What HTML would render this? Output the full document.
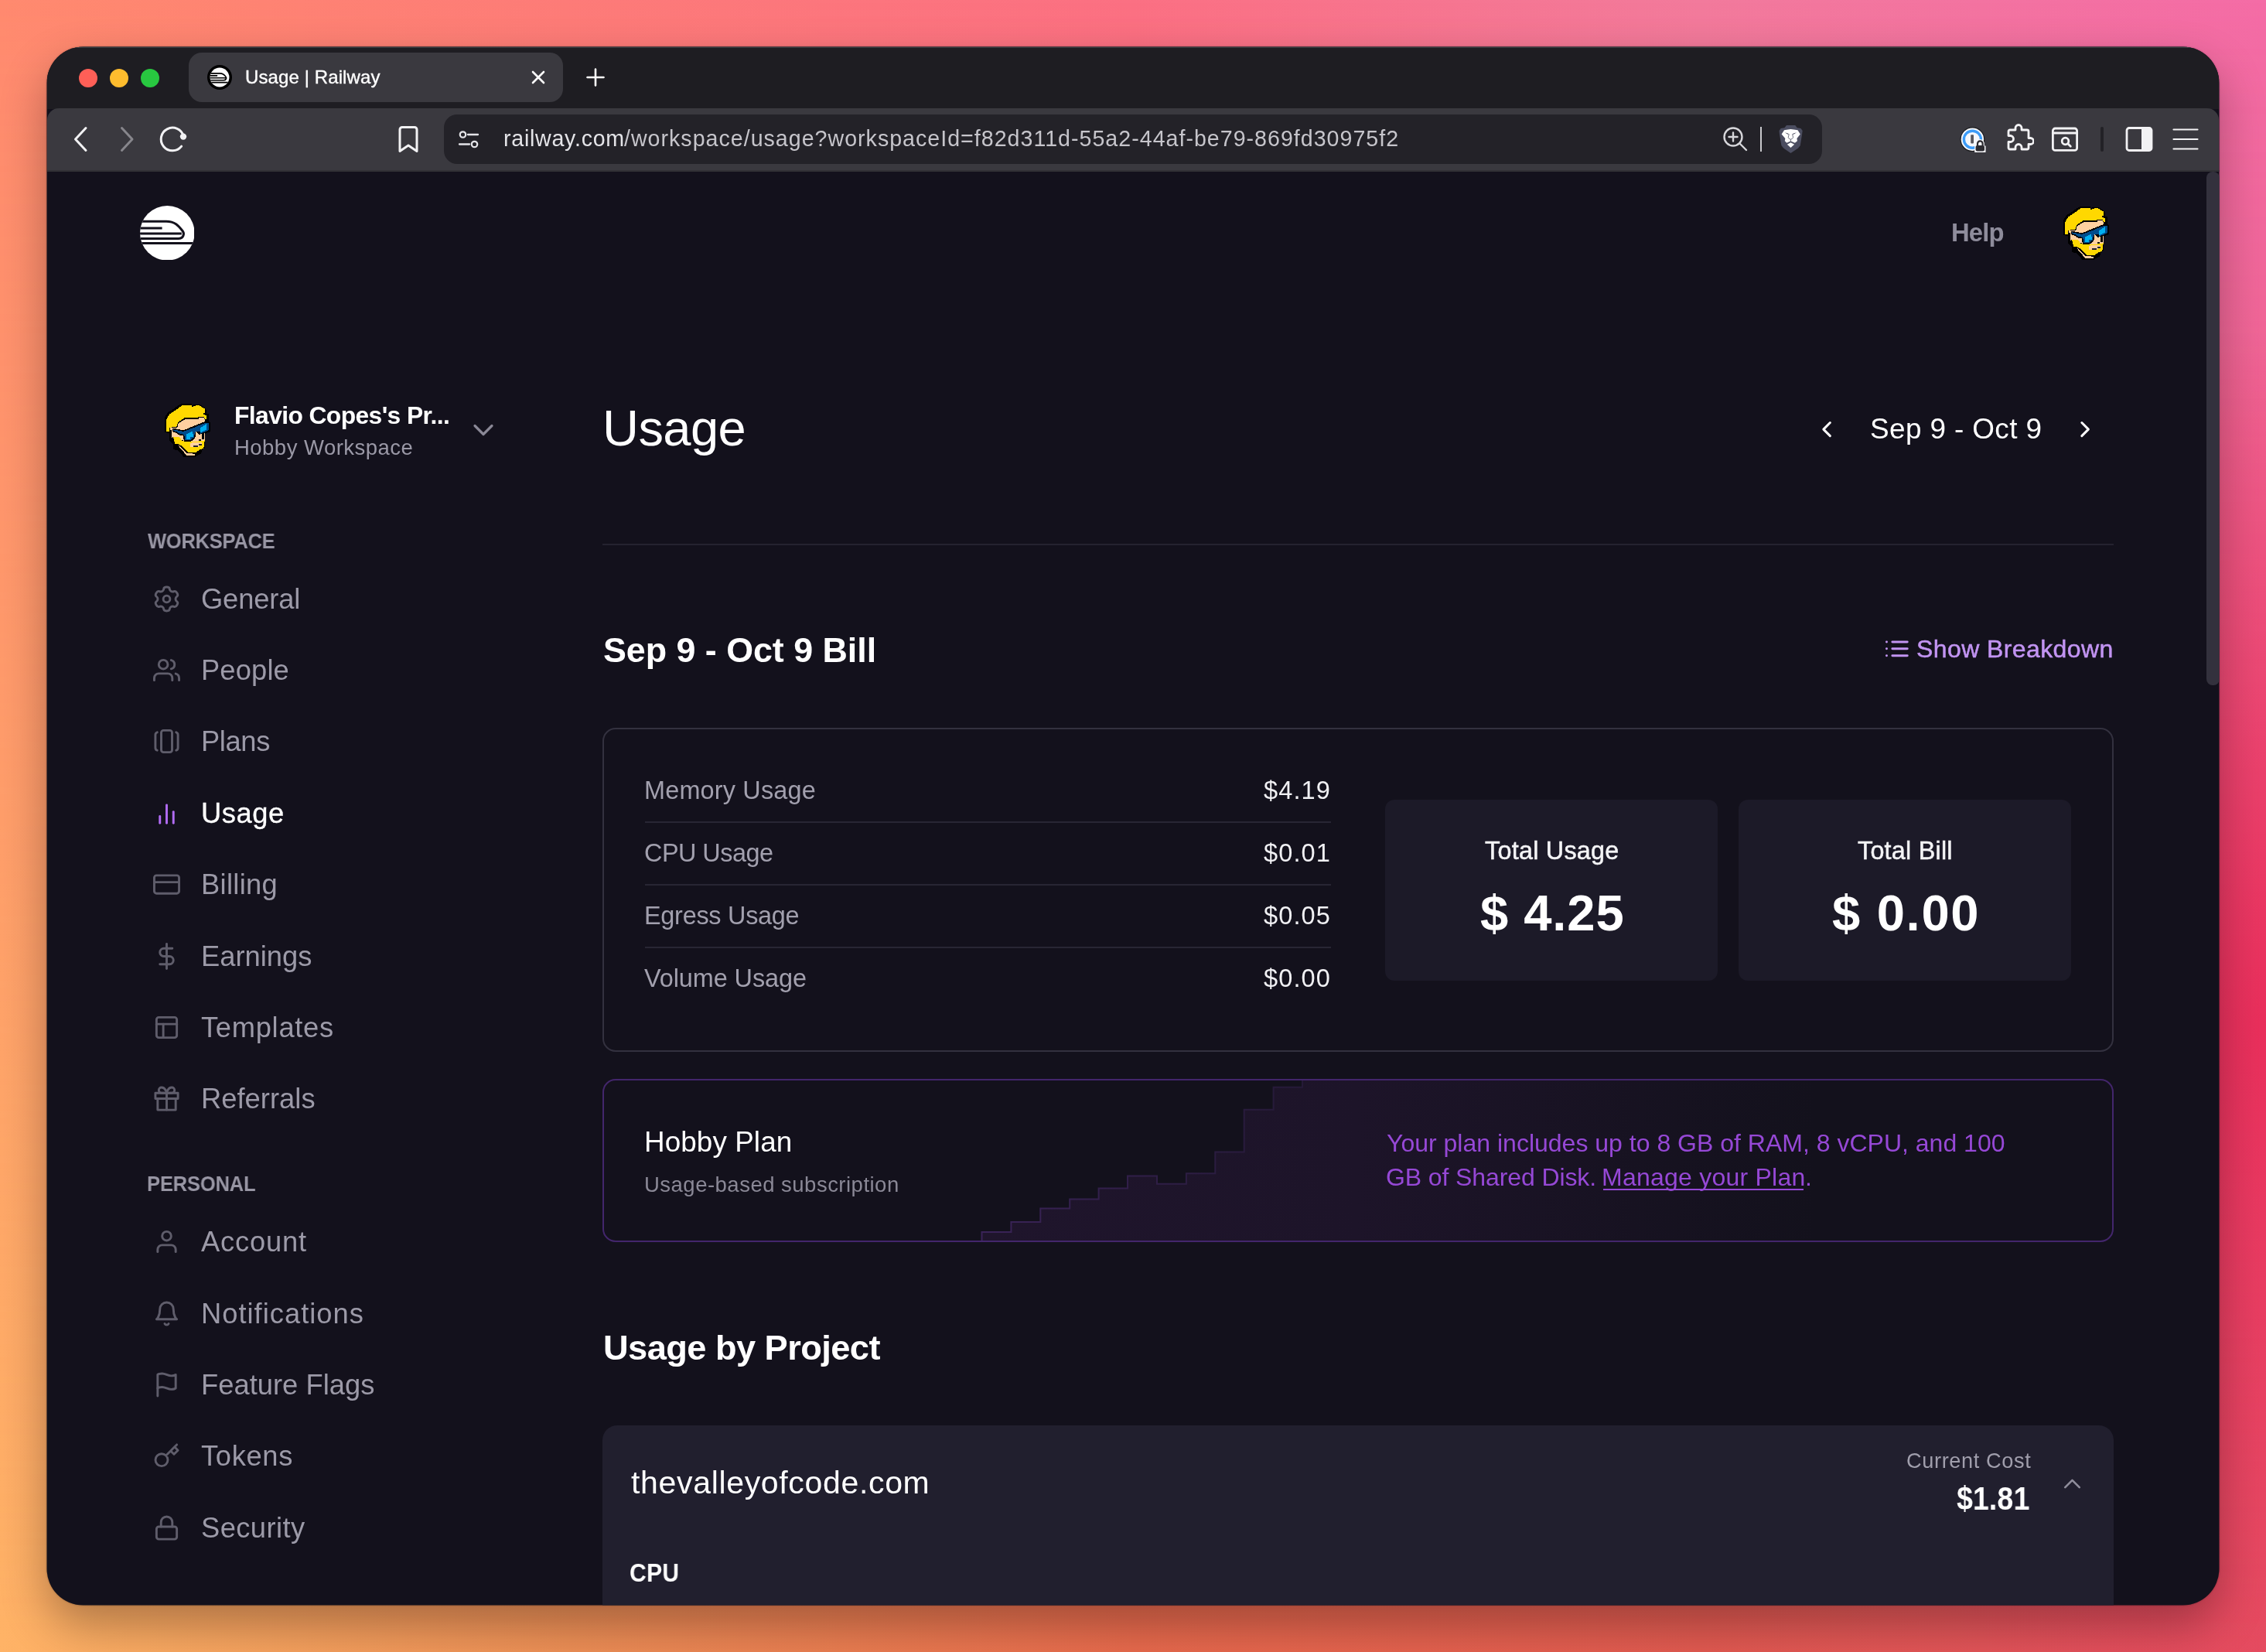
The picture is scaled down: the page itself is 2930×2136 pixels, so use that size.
<!DOCTYPE html>
<html><head><meta charset="utf-8"><title>Usage | Railway</title>
<style>
html,body{margin:0;padding:0}
body{width:2930px;height:2136px;overflow:hidden;position:relative;font-family:'Liberation Sans',sans-serif;
 background:linear-gradient(90deg,#ff8a6f 0%,#fd7b78 25%,#fb7083 50%,#f27a9c 75%,#f46ca6 100%);}
#bg2{left:0;top:0;width:2930px;height:2136px;background:linear-gradient(90deg,#ffb366 0%,#ee9056 25%,#e86a4c 50%,#e25a50 75%,#e44e60 100%);-webkit-mask-image:linear-gradient(180deg,rgba(0,0,0,0) 0%,rgba(0,0,0,1) 100%);mask-image:linear-gradient(180deg,rgba(0,0,0,0) 0%,rgba(0,0,0,1) 100%)}
#bg3{left:0;top:0;width:2930px;height:2136px;background:radial-gradient(ellipse 800px 900px at 100% 62%,rgba(234,36,84,.8) 0%,rgba(234,36,84,0) 100%)}
.a{position:absolute}
.t{position:absolute;white-space:pre;line-height:1;will-change:transform}
#shadow{left:61px;top:61px;width:2808px;height:2014px;border-radius:47px;box-shadow:0 26px 60px rgba(0,0,0,.30),0 0 3px rgba(0,0,0,.45);}
#win{left:0;top:0;width:2930px;height:2136px;clip-path:inset(60.5px 60.5px 60.5px 60.5px round 47px);background:#13111c}
</style></head><body>
<div id="bg2" class="a"></div><div id="bg3" class="a"></div>
<div id="shadow" class="a"></div>
<div id="win" class="a">
<!-- tab strip -->
<div class="a" style="left:61px;top:61px;width:2808px;height:80px;background:#1e1d22"></div>
<div class="a" style="left:61px;top:60px;width:2808px;height:2px;background:#3a3d40"></div>
<div class="a" style="left:102px;top:89px;width:24px;height:24px;border-radius:50%;background:#ff5f57"></div>
<div class="a" style="left:142px;top:89px;width:24px;height:24px;border-radius:50%;background:#febc2e"></div>
<div class="a" style="left:182px;top:89px;width:24px;height:24px;border-radius:50%;background:#28c840"></div>
<div class="a" style="left:244px;top:68px;width:484px;height:64px;border-radius:17px;background:#3a393f"></div>
<!-- favicon -->
<svg class="a" style="left:267.800px;top:83.900px" width="32" height="32" viewBox="0 0 70.600 70.600"><defs><clipPath id="fc"><circle cx="35.300" cy="35.300" r="27.500"/></clipPath></defs><circle cx="35.300" cy="35.300" r="35.300" fill="#000"/><circle cx="35.300" cy="35.300" r="27.500" fill="#fff"/>
<g stroke="#000" stroke-width="3.600" fill="none" clip-path="url(#fc)"><path d="M0 24H36C45 24 49 28 53 34C56 38 53 43.500 47 43.500H0M0 30.500H29M0 37H54M0 50H71"/></g></svg>
<svg class="a" style="left:684px;top:88px" width="24" height="24" viewBox="0 0 24 24" fill="none" stroke="#fff" stroke-width="2.600" stroke-linecap="round"><path d="M5 5L19 19M19 5L5 19"/></svg>
<svg class="a" style="left:756px;top:86px" width="28" height="28" viewBox="0 0 28 28" fill="none" stroke="#fff" stroke-width="2.600" stroke-linecap="round"><path d="M14 3.500V24.500M3.500 14H24.500"/></svg>
<!-- toolbar -->
<div class="a" style="left:61px;top:140px;width:2808px;height:82px;background:#3a393f;border-radius:15px 15px 0 0"></div>
<div class="a" style="left:61px;top:220px;width:2809px;height:2px;background:#323136"></div>
<svg class="a" style="left:88px;top:160px" width="36" height="40" viewBox="0 0 36 40" fill="none" stroke="#f2f2f4" stroke-width="3" stroke-linecap="round" stroke-linejoin="round"><path d="M23 5.500L9.500 20L23 34.500"/></svg>
<svg class="a" style="left:146px;top:160px" width="36" height="40" viewBox="0 0 36 40" fill="none" stroke="#87868c" stroke-width="3" stroke-linecap="round" stroke-linejoin="round"><path d="M11.500 5.500L25 20L11.500 34.500"/></svg>
<svg class="a" style="left:203px;top:160px" width="40" height="40" viewBox="0 0 40 40" fill="none" stroke="#f2f2f4" stroke-width="3" stroke-linecap="round"><path d="M31.660 29.110A14.800 14.800 0 1 1 34.300 16.170"/><circle cx="34" cy="16.600" r="4.200" fill="#f2f2f4" stroke="none"/></svg>
<svg class="a" style="left:513px;top:160px" width="30" height="40" viewBox="0 0 30 40" fill="none" stroke="#f2f2f4" stroke-width="3" stroke-linejoin="round"><path d="M4 7.500a3 3 0 0 1 3-3h16a3 3 0 0 1 3 3V35.500L15 28L4 35.500Z"/></svg>
<div class="a" style="left:574px;top:148px;width:1782px;height:64px;border-radius:17px;background:#232228"></div>
<svg class="a" style="left:590px;top:164px" width="32" height="32" viewBox="0 0 32 32" fill="none" stroke="#e4e4e8" stroke-width="2.300" stroke-linecap="round"><circle cx="8.500" cy="10" r="3.700"/><path d="M15 10H28"/><circle cx="23.500" cy="22.500" r="3.700"/><path d="M4 22.500H17"/></svg>
<!-- url right icons -->
<svg class="a" style="left:2226px;top:162px" width="36" height="36" viewBox="0 0 36 36" fill="none" stroke="#d6d6da" stroke-width="2.400" stroke-linecap="round"><circle cx="15" cy="15" r="11.500"/><path d="M23.500 23.500L32 32M15 9.500V20.500M9.500 15H20.500"/></svg>
<div class="a" style="left:2276px;top:164px;width:2px;height:32px;background:#c8c8cc"></div>
<svg class="a" style="left:2290px;top:150px" width="55" height="60" viewBox="0 0 1514 1652"><polygon fill="#4b4d60" points="550,330 860,330 930,420 1060,440 1120,520 1105,640 1040,1050 960,1150 700,1320 450,1150 370,1050 300,640 290,520 350,440 480,420"/><polygon fill="#fff" points="470,500 600,480 700,470 810,480 950,500 1040,650 920,800 935,890 850,960 720,900 700,880 680,900 560,960 490,890 505,800 375,650"/><polygon fill="#fff" points="700,940 830,1010 700,1130 575,1010"/><path d="M490 590Q560 598 645 640L600 652Q550 615 490 590ZM910 590Q840 598 755 640L800 652Q850 615 910 590Z" fill="#3c3e50"/><path d="M640 645L612 765Q640 822 700 832Q760 822 788 765L760 645M700 832V885" fill="none" stroke="#3c3e50" stroke-width="20" stroke-linejoin="round"/></svg>
<!-- ext icons -->
<svg class="a" style="left:2530px;top:160px" width="42" height="42" viewBox="0 0 42 42"><circle cx="20.400" cy="20.200" r="15.900" fill="#1b1b1e"/><circle cx="20.400" cy="20.200" r="14.700" fill="#f6f7fa"/><circle cx="20.400" cy="20.200" r="11" fill="none" stroke="#3d9cf8" stroke-width="3.400"/><rect x="18.200" y="14.200" width="3.800" height="11.200" rx="0.800" fill="#58575d"/><path d="M23.200 29.500v-3.500a6.300 6.300 0 0 1 12.600 0v2.500h1.700v8.500h-14.300Z" fill="#f6f7fa"/><rect x="24.600" y="28" width="11.400" height="7.600" rx="2" fill="#2c2b30"/><path d="M27 28.500v-2.800a3.300 3.300 0 0 1 6.600 0v2.800" fill="none" stroke="#2c2b30" stroke-width="2.200"/></svg>
<svg class="a" style="left:2592px;top:159px" width="38" height="38" viewBox="0 0 38 38" fill="none" stroke="#f2f2f4" stroke-width="2.800" stroke-linejoin="round"><path d="M14 6.500a4 4 0 0 1 8 0V9h7a2 2 0 0 1 2 2v8.500h2.500a4 4 0 0 1 0 8H31v4.500a2 2 0 0 1-2 2h-7v-2.500a4 4 0 0 0-8 0V34H7a2 2 0 0 1-2-2v-7.500h2.500a4 4 0 0 0 0-8H5v-5.500a2 2 0 0 1 2-2h7Z"/></svg>
<svg class="a" style="left:2651px;top:163px" width="38" height="34" viewBox="0 0 38 34" fill="none" stroke="#f2f2f4" stroke-width="2.800" stroke-linecap="round"><rect x="3.400" y="3" width="31.200" height="28.400" rx="3"/><path d="M3.400 9H34.600" stroke-width="3.200"/><circle cx="19.500" cy="19.500" r="4.300"/><path d="M22.800 22.800L26.300 26.300"/></svg>
<div class="a" style="left:2715.500px;top:164px;width:4px;height:32px;background:#222126;border-radius:2px"></div>
<svg class="a" style="left:2748px;top:163px" width="36" height="34" viewBox="0 0 36 34"><rect x="2" y="2.500" width="32" height="29" rx="3" fill="none" stroke="#f2f2f4" stroke-width="2.800"/><rect x="21" y="3" width="13" height="28" fill="#f2f2f4"/></svg>
<svg class="a" style="left:2808px;top:164px" width="36" height="32" viewBox="0 0 36 32" fill="none" stroke="#f4f4f6" stroke-width="2.200" stroke-linecap="round"><path d="M2.500 3.500H33.500M2.500 16H33.500M2.500 28.500H33.500"/></svg>
<!-- scrollbar -->
<div class="a" style="left:2853px;top:222px;width:17px;height:664px;background:#33313d;border-radius:8px"></div>

<!-- page -->
<svg class="a" style="left:180.600px;top:265.800px" width="70.600" height="70.600" viewBox="0 0 70.600 70.600"><defs><clipPath id="lc"><circle cx="35.300" cy="35.300" r="35.300"/></clipPath></defs><circle cx="35.300" cy="35.300" r="35.300" fill="#fff"/>
<g stroke="#13111c" stroke-width="3" fill="none" clip-path="url(#lc)"><path d="M0 20.200H34C45 20.200 49.500 25.500 55.200 32.800C58 36.500 56 42.500 49.500 42.500H0"/><path d="M0 29H28.600M0 36H53.800M0 48.500H71"/></g></svg>
<svg class="a" style="left:2655px;top:255px" width="90" height="90" viewBox="0 0 1652 1652" shape-rendering="crispEdges">
<polygon fill="#000" points="640,225 880,225 880,262 960,235 1080,245 1215,330 1235,460 1285,470 1285,625 1320,660 1320,885 1200,930 1200,1250 1135,1300 1100,1400 960,1480 690,1480 545,1330 440,1300 440,1180 350,1100 350,920 240,900 240,540 310,430 470,330 560,260"/>
<polygon fill="#ffd800" points="650,262 880,262 880,300 990,262 1060,262 1195,345 1195,440 1160,440 1160,470 1230,500 1230,580 1190,590 1160,530 1040,530 1030,560 720,545 640,600 560,660 520,760 350,790 350,890 282,890 282,590 350,470 520,360"/>
<polygon fill="#ffd0a0" points="560,690 640,640 720,590 1040,590 1040,545 1160,545 1190,600 1190,1100 900,1150 700,1100 440,1000 400,1040 400,850 362,830 362,800 540,780"/>
<polygon fill="#ffd800" points="440,1010 590,1010 640,1100 900,1130 1190,1090 1160,1290 1080,1300 990,1370 800,1370 600,1190 480,1170"/>
<polygon fill="#ffd0a0" points="560,1215 620,1215 800,1390 950,1410 950,1450 760,1450"/><polygon fill="#ffd0a0" points="850,1150 1110,1130 1120,1185 1030,1250 850,1250"/>
<polygon fill="#000" points="420,800 690,850 900,760 1200,640 1300,640 1300,870 1170,920 1170,1060 1120,1060 1120,940 1060,950 980,880 960,1030 860,1120 700,1120 670,980 590,970 500,910 420,880"/>
<polygon fill="#004c8c" points="440,830 680,880 900,800 1200,675 1285,675 1285,850 1160,900 1090,930 1090,890 1000,880 950,900 940,1010 840,1090 720,1090 700,950 600,940 520,885 440,860"/>
<polygon fill="#00aeef" points="760,940 900,870 920,1010 845,1020 835,1060 760,1060"/>
<polygon fill="#00aeef" points="1090,790 1230,700 1235,830 1160,870 1090,900"/>
<rect fill="#111" x="1040" y="1065" width="70" height="28"/><rect fill="#223" x="1040" y="1180" width="75" height="26"/><rect fill="#223" x="920" y="1215" width="110" height="26"/>
<polygon fill="#000" points="580,1215 640,1215 820,1390 760,1390"/>
</svg>
<svg class="a" style="left:200px;top:510px" width="90" height="90" viewBox="0 0 1652 1652" shape-rendering="crispEdges">
<polygon fill="#000" points="640,225 880,225 880,262 960,235 1080,245 1215,330 1235,460 1285,470 1285,625 1320,660 1320,885 1200,930 1200,1250 1135,1300 1100,1400 960,1480 690,1480 545,1330 440,1300 440,1180 350,1100 350,920 240,900 240,540 310,430 470,330 560,260"/>
<polygon fill="#ffd800" points="650,262 880,262 880,300 990,262 1060,262 1195,345 1195,440 1160,440 1160,470 1230,500 1230,580 1190,590 1160,530 1040,530 1030,560 720,545 640,600 560,660 520,760 350,790 350,890 282,890 282,590 350,470 520,360"/>
<polygon fill="#ffd0a0" points="560,690 640,640 720,590 1040,590 1040,545 1160,545 1190,600 1190,1100 900,1150 700,1100 440,1000 400,1040 400,850 362,830 362,800 540,780"/>
<polygon fill="#ffd800" points="440,1010 590,1010 640,1100 900,1130 1190,1090 1160,1290 1080,1300 990,1370 800,1370 600,1190 480,1170"/>
<polygon fill="#ffd0a0" points="560,1215 620,1215 800,1390 950,1410 950,1450 760,1450"/><polygon fill="#ffd0a0" points="850,1150 1110,1130 1120,1185 1030,1250 850,1250"/>
<polygon fill="#000" points="420,800 690,850 900,760 1200,640 1300,640 1300,870 1170,920 1170,1060 1120,1060 1120,940 1060,950 980,880 960,1030 860,1120 700,1120 670,980 590,970 500,910 420,880"/>
<polygon fill="#004c8c" points="440,830 680,880 900,800 1200,675 1285,675 1285,850 1160,900 1090,930 1090,890 1000,880 950,900 940,1010 840,1090 720,1090 700,950 600,940 520,885 440,860"/>
<polygon fill="#00aeef" points="760,940 900,870 920,1010 845,1020 835,1060 760,1060"/>
<polygon fill="#00aeef" points="1090,790 1230,700 1235,830 1160,870 1090,900"/>
<rect fill="#111" x="1040" y="1065" width="70" height="28"/><rect fill="#223" x="1040" y="1180" width="75" height="26"/><rect fill="#223" x="920" y="1215" width="110" height="26"/>
<polygon fill="#000" points="580,1215 640,1215 820,1390 760,1390"/>
</svg>
<div class="a" style="left:779px;top:703px;width:1954px;height:2px;background:#24222f"></div>
<!-- bill card -->
<div class="a" style="left:779px;top:941px;width:1954px;height:419px;box-sizing:border-box;border:2px solid #33313f;border-radius:17px"></div>
<div class="a" style="left:834px;top:1062px;width:887px;height:2px;background:#282634"></div>
<div class="a" style="left:834px;top:1143px;width:887px;height:2px;background:#282634"></div>
<div class="a" style="left:834px;top:1224px;width:887px;height:2px;background:#282634"></div>
<div class="a" style="left:1791px;top:1034px;width:430px;height:234px;border-radius:12px;background:#1c1a28"></div>
<div class="a" style="left:2248px;top:1034px;width:430px;height:234px;border-radius:12px;background:#1c1a28"></div>
<!-- plan card -->
<div class="a" style="left:779px;top:1395px;width:1954px;height:211px;border-radius:17px;overflow:hidden">
<svg class="a" style="left:0;top:0" width="1954" height="211" viewBox="779 1395 1954 211">
<defs><linearGradient id="pg" x1="1270" x2="2350" y1="0" y2="0" gradientUnits="userSpaceOnUse"><stop offset="0" stop-color="#1f152c"/><stop offset=".45" stop-color="#1d1429"/><stop offset="1" stop-color="#13111c"/></linearGradient>
<linearGradient id="ps" x1="1270" x2="1700" y1="0" y2="0" gradientUnits="userSpaceOnUse"><stop offset="0" stop-color="#3a2358"/><stop offset="1" stop-color="#241936"/></linearGradient></defs>
<path d="M1269.500 1606V1593H1307.400V1579.900H1345.300V1562.600H1383.200V1550.400H1420.600V1536.400H1458V1520.500H1496V1530.700H1533.900V1517.200H1571.300V1489.600H1608.700V1434.800H1646.600V1405.800H1684V1395H2733V1606Z" fill="url(#pg)"/>
<path d="M1269.500 1606V1593H1307.400V1579.900H1345.300V1562.600H1383.200V1550.400H1420.600V1536.400H1458V1520.500H1496V1530.700H1533.900V1517.200H1571.300V1489.600H1608.700V1434.800H1646.600V1405.800H1684V1395" fill="none" stroke="url(#ps)" stroke-width="2"/>
</svg></div>
<div class="a" style="left:779px;top:1395px;width:1954px;height:211px;box-sizing:border-box;border:2px solid #43266c;border-radius:17px"></div>
<!-- project card -->
<div class="a" style="left:779px;top:1843px;width:1954px;height:300px;border-radius:19px;background:#211f2e"></div>
<div class="a" style="left:2072.9px;top:1537.1px;width:259.5px;height:2.4px;background:#9648d6"></div>
<svg class="a" style="left:198.0px;top:756.5px" width="35" height="35" viewBox="0 0 24 24" fill="none" stroke="#5f5d6b" stroke-width="2" stroke-linecap="round" stroke-linejoin="round" ><circle cx="12" cy="12" r="3"/><path d="M8.06 5.18Q9.26 4.48 9.41 2.93Q9.55 1.38 12.00 1.38Q14.45 1.38 14.59 2.93Q14.74 4.48 15.94 5.18Q17.14 5.87 18.56 5.22Q19.97 4.57 21.20 6.69Q22.42 8.81 21.15 9.71Q19.88 10.61 19.88 12.00Q19.88 13.39 21.15 14.29Q22.42 15.19 21.20 17.31Q19.97 19.43 18.56 18.78Q17.14 18.13 15.94 18.82Q14.74 19.52 14.59 21.07Q14.45 22.62 12.00 22.62Q9.55 22.62 9.41 21.07Q9.26 19.52 8.06 18.82Q6.86 18.13 5.44 18.78Q4.03 19.43 2.80 17.31Q1.58 15.19 2.85 14.29Q4.12 13.39 4.12 12.00Q4.12 10.61 2.85 9.71Q1.58 8.81 2.80 6.69Q4.03 4.57 5.44 5.22Q6.86 5.87 8.06 5.18Z"/></svg>
<svg class="a" style="left:198.0px;top:848.9px" width="35" height="35" viewBox="0 0 24 24" fill="none" stroke="#5f5d6b" stroke-width="2" stroke-linecap="round" stroke-linejoin="round" ><path d="M17 21v-2a4 4 0 0 0-4-4H5a4 4 0 0 0-4 4v2"/><circle cx="9" cy="7" r="4"/><path d="M23 21v-2a4 4 0 0 0-3-3.87"/><path d="M16 3.13a4 4 0 0 1 0 7.75"/></svg>
<svg class="a" style="left:198.0px;top:941.3px" width="35" height="35" viewBox="0 0 24 24" fill="none" stroke="#5f5d6b" stroke-width="2" stroke-linecap="round" stroke-linejoin="round" ><rect x="7.2" y="2.3" width="9.6" height="19.4" rx="2"/><path d="M3.6 4C2.5 4.3 2 5.2 2 6.4v11.2c0 1.2.5 2.1 1.6 2.4"/><path d="M20.4 4c1.1.3 1.6 1.2 1.6 2.4v11.2c0 1.2-.5 2.1-1.6 2.4"/></svg>
<svg class="a" style="left:198.0px;top:1034.5px" width="35" height="35" viewBox="0 0 24 24" fill="none" stroke="#b26cf5" stroke-width="2" stroke-linecap="round" stroke-linejoin="round" ><line x1="18" y1="20" x2="18" y2="10"/><line x1="12" y1="20" x2="12" y2="4"/><line x1="6" y1="20" x2="6" y2="14"/></svg>
<svg class="a" style="left:198.0px;top:1126.1px" width="35" height="35" viewBox="0 0 24 24" fill="none" stroke="#5f5d6b" stroke-width="2" stroke-linecap="round" stroke-linejoin="round" ><rect x="1" y="4" width="22" height="16" rx="2" ry="2"/><line x1="1" y1="10" x2="23" y2="10"/></svg>
<svg class="a" style="left:198.0px;top:1218.5px" width="35" height="35" viewBox="0 0 24 24" fill="none" stroke="#5f5d6b" stroke-width="2" stroke-linecap="round" stroke-linejoin="round" ><line x1="12" y1="1" x2="12" y2="23"/><path d="M17 5H9.5a3.5 3.5 0 0 0 0 7h5a3.5 3.5 0 0 1 0 7H6"/></svg>
<svg class="a" style="left:198.0px;top:1310.9px" width="35" height="35" viewBox="0 0 24 24" fill="none" stroke="#5f5d6b" stroke-width="2" stroke-linecap="round" stroke-linejoin="round" ><rect x="3" y="3" width="18" height="18" rx="2" ry="2"/><line x1="3" y1="9" x2="21" y2="9"/><line x1="9" y1="21" x2="9" y2="9"/></svg>
<svg class="a" style="left:198.0px;top:1403.3px" width="35" height="35" viewBox="0 0 24 24" fill="none" stroke="#5f5d6b" stroke-width="2" stroke-linecap="round" stroke-linejoin="round" ><polyline points="20 12 20 22 4 22 4 12"/><rect x="2" y="7" width="20" height="5"/><line x1="12" y1="22" x2="12" y2="7"/><path d="M12 7H7.5a2.5 2.5 0 0 1 0-5C11 2 12 7 12 7z"/><path d="M12 7h4.5a2.5 2.5 0 0 0 0-5C13 2 12 7 12 7z"/></svg>
<svg class="a" style="left:198.0px;top:1588.1px" width="35" height="35" viewBox="0 0 24 24" fill="none" stroke="#5f5d6b" stroke-width="2" stroke-linecap="round" stroke-linejoin="round" ><path d="M20 21v-2a4 4 0 0 0-4-4H8a4 4 0 0 0-4 4v2"/><circle cx="12" cy="7" r="4"/></svg>
<svg class="a" style="left:198.0px;top:1680.5px" width="35" height="35" viewBox="0 0 24 24" fill="none" stroke="#5f5d6b" stroke-width="2" stroke-linecap="round" stroke-linejoin="round" ><path d="M18 8A6 6 0 0 0 6 8c0 7-3 9-3 9h18s-3-2-3-9"/><path d="M13.73 21a2 2 0 0 1-3.46 0"/></svg>
<svg class="a" style="left:198.0px;top:1772.9px" width="35" height="35" viewBox="0 0 24 24" fill="none" stroke="#5f5d6b" stroke-width="2" stroke-linecap="round" stroke-linejoin="round" ><path d="M4 15s1-1 4-1 5 2 8 2 4-1 4-1V3s-1 1-4 1-5-2-8-2-4 1-4 1z"/><line x1="4" y1="22" x2="4" y2="15"/></svg>
<svg class="a" style="left:198.0px;top:1865.3px" width="35" height="35" viewBox="0 0 24 24" fill="none" stroke="#5f5d6b" stroke-width="2" stroke-linecap="round" stroke-linejoin="round" ><path d="M21 2l-2 2m-7.61 7.61a5.5 5.5 0 1 1-7.778 7.778 5.5 5.5 0 0 1 7.777-7.777zm0 0L15.5 7.500m0 0l3 3L22 7l-3-3m-3.500 3.500L19 4"/></svg>
<svg class="a" style="left:198.0px;top:1957.7px" width="35" height="35" viewBox="0 0 24 24" fill="none" stroke="#5f5d6b" stroke-width="2" stroke-linecap="round" stroke-linejoin="round" ><rect x="3" y="11" width="18" height="11" rx="2" ry="2"/><path d="M7 11V7a5 5 0 0 1 10 0v4"/></svg>
<svg class="a" style="left:603.0px;top:534.0px" width="44" height="44" viewBox="0 0 24 24" fill="none" stroke="#8a8896" stroke-width="1.75" stroke-linecap="round" stroke-linejoin="round" ><polyline points="6 9 12 15 18 9"/></svg>
<svg class="a" style="left:2344.6px;top:538.1px" width="34.2" height="34.2" viewBox="0 0 24 24" fill="none" stroke="#ffffff" stroke-width="2.1" stroke-linecap="round" stroke-linejoin="round" ><polyline points="15 18 9 12 15 6"/></svg>
<svg class="a" style="left:2678.7px;top:538.1px" width="34.2" height="34.2" viewBox="0 0 24 24" fill="none" stroke="#ffffff" stroke-width="2.1" stroke-linecap="round" stroke-linejoin="round" ><polyline points="9 18 15 12 9 6"/></svg>
<svg class="a" style="left:2435.1px;top:820.6px" width="35.7" height="35.7" viewBox="0 0 24 24" fill="none" stroke="#c294f2" stroke-width="2" stroke-linecap="round" stroke-linejoin="round" ><line x1="8" y1="6" x2="21" y2="6"/><line x1="8" y1="12" x2="21" y2="12"/><line x1="8" y1="18" x2="21" y2="18"/><line x1="3" y1="6" x2="3.01" y2="6"/><line x1="3" y1="12" x2="3.01" y2="12"/><line x1="3" y1="18" x2="3.01" y2="18"/></svg>
<svg class="a" style="left:2661.2px;top:1899.9px" width="37" height="37" viewBox="0 0 24 24" fill="none" stroke="#8f8d9b" stroke-width="1.7" stroke-linecap="round" stroke-linejoin="round" ><polyline points="18 15 12 9 6 15"/></svg>
<span class="t" style="left:316.60px;top:88.38px;font-size:24px;font-weight:400;color:#ffffff;letter-spacing:0.102px;-webkit-text-stroke:0.35px #ffffff;">Usage | Railway</span>
<span class="t" style="left:650.90px;top:165.29px;font-size:28.6px;font-weight:400;color:#e4e4e8;letter-spacing:0.730px;">railway.com</span>
<span class="t" style="left:806.80px;top:165.29px;font-size:28.6px;font-weight:400;color:#c6c5cb;letter-spacing:1.008px;">/workspace/usage?workspaceId=f82d311d-55a2-44af-be79-869fd30975f2</span>
<span class="t" style="left:2523.00px;top:285.33px;font-size:32.8px;font-weight:700;color:#8e8c9b;letter-spacing:-0.812px;">Help</span>
<span class="t" style="left:303.40px;top:521.88px;font-size:31.8px;font-weight:700;color:#ffffff;letter-spacing:-0.604px;">Flavio Copes's Pr...</span>
<span class="t" style="left:303.40px;top:564.62px;font-size:27.5px;font-weight:400;color:#9a98a6;letter-spacing:0.473px;">Hobby Workspace</span>
<span class="t" style="left:190.50px;top:686.18px;font-size:27.2px;font-weight:700;color:#9896a4;letter-spacing:-0.324px;transform:scaleX(0.94);transform-origin:0 0;">WORKSPACE</span>
<span class="t" style="left:189.56px;top:1516.78px;font-size:27.2px;font-weight:700;color:#9896a4;letter-spacing:-0.210px;transform:scaleX(0.94);transform-origin:0 0;">PERSONAL</span>
<span class="t" style="left:260.00px;top:756.87px;font-size:36.3px;font-weight:400;color:#9c9aa8;letter-spacing:-0.144px;">General</span>
<span class="t" style="left:260.00px;top:849.27px;font-size:36.3px;font-weight:400;color:#9c9aa8;letter-spacing:0.153px;">People</span>
<span class="t" style="left:260.00px;top:940.67px;font-size:36.3px;font-weight:400;color:#9c9aa8;letter-spacing:-0.362px;">Plans</span>
<span class="t" style="left:260.00px;top:1034.07px;font-size:36.3px;font-weight:400;color:#ffffff;letter-spacing:0.541px;-webkit-text-stroke:0.3px #ffffff;">Usage</span>
<span class="t" style="left:260.00px;top:1126.47px;font-size:36.3px;font-weight:400;color:#9c9aa8;letter-spacing:0.308px;">Billing</span>
<span class="t" style="left:260.00px;top:1218.87px;font-size:36.3px;font-weight:400;color:#9c9aa8;letter-spacing:0.028px;">Earnings</span>
<span class="t" style="left:260.00px;top:1311.27px;font-size:36.3px;font-weight:400;color:#9c9aa8;letter-spacing:0.715px;">Templates</span>
<span class="t" style="left:260.00px;top:1402.67px;font-size:36.3px;font-weight:400;color:#9c9aa8;letter-spacing:0.038px;">Referrals</span>
<span class="t" style="left:260.00px;top:1588.47px;font-size:36.3px;font-weight:400;color:#9c9aa8;letter-spacing:0.839px;">Account</span>
<span class="t" style="left:260.00px;top:1680.87px;font-size:36.3px;font-weight:400;color:#9c9aa8;letter-spacing:1.012px;">Notifications</span>
<span class="t" style="left:260.00px;top:1773.27px;font-size:36.3px;font-weight:400;color:#9c9aa8;letter-spacing:0.035px;">Feature Flags</span>
<span class="t" style="left:260.00px;top:1864.67px;font-size:36.3px;font-weight:400;color:#9c9aa8;letter-spacing:0.669px;">Tokens</span>
<span class="t" style="left:260.00px;top:1958.07px;font-size:36.3px;font-weight:400;color:#9c9aa8;letter-spacing:0.433px;">Security</span>
<span class="t" style="left:779.00px;top:521.18px;font-size:65px;font-weight:400;color:#ffffff;letter-spacing:-0.535px;">Usage</span>
<span class="t" style="left:2417.80px;top:536.76px;font-size:36.9px;font-weight:400;color:#ffffff;letter-spacing:0.381px;">Sep 9 - Oct 9</span>
<span class="t" style="left:779.90px;top:817.68px;font-size:44.8px;font-weight:700;color:#ffffff;letter-spacing:-0.021px;">Sep 9 - Oct 9 Bill</span>
<span class="t" style="left:2478.40px;top:822.51px;font-size:32px;font-weight:400;color:#c294f2;letter-spacing:0.405px;-webkit-text-stroke:0.5px #c294f2;">Show Breakdown</span>
<span class="t" style="left:832.80px;top:1006.47px;font-size:32.4px;font-weight:400;color:#a2a0ae;letter-spacing:0.192px;">Memory Usage</span>
<span class="t" style="left:1633.90px;top:1005.50px;font-size:32.6px;font-weight:400;color:#f0f0f3;letter-spacing:1.073px;">$4.19</span>
<span class="t" style="left:832.80px;top:1087.47px;font-size:32.4px;font-weight:400;color:#a2a0ae;letter-spacing:-0.513px;">CPU Usage</span>
<span class="t" style="left:1633.90px;top:1086.50px;font-size:32.6px;font-weight:400;color:#f0f0f3;letter-spacing:1.073px;">$0.01</span>
<span class="t" style="left:832.80px;top:1168.47px;font-size:32.4px;font-weight:400;color:#a2a0ae;letter-spacing:-0.257px;">Egress Usage</span>
<span class="t" style="left:1633.90px;top:1167.50px;font-size:32.6px;font-weight:400;color:#f0f0f3;letter-spacing:1.073px;">$0.05</span>
<span class="t" style="left:832.80px;top:1249.47px;font-size:32.4px;font-weight:400;color:#a2a0ae;letter-spacing:-0.068px;">Volume Usage</span>
<span class="t" style="left:1633.90px;top:1248.50px;font-size:32.6px;font-weight:400;color:#f0f0f3;letter-spacing:1.073px;">$0.00</span>
<span class="t" style="left:1920.00px;top:1084.46px;font-size:32.3px;font-weight:400;color:#f4f4f6;letter-spacing:0.271px;-webkit-text-stroke:0.5px #f4f4f6;">Total Usage</span>
<span class="t" style="left:1913.80px;top:1147.81px;font-size:65.2px;font-weight:700;color:#ffffff;letter-spacing:0.883px;">$ 4.25</span>
<span class="t" style="left:2401.90px;top:1084.46px;font-size:32.3px;font-weight:400;color:#f4f4f6;letter-spacing:0.246px;-webkit-text-stroke:0.5px #f4f4f6;">Total Bill</span>
<span class="t" style="left:2369.10px;top:1148.01px;font-size:65.2px;font-weight:700;color:#ffffff;letter-spacing:1.663px;">$ 0.00</span>
<span class="t" style="left:832.90px;top:1458.55px;font-size:36.8px;font-weight:400;color:#ffffff;letter-spacing:0.103px;">Hobby Plan</span>
<span class="t" style="left:833.40px;top:1517.52px;font-size:27.5px;font-weight:400;color:#8a8896;letter-spacing:0.489px;">Usage-based subscription</span>
<span class="t" style="left:1792.60px;top:1462.41px;font-size:32px;font-weight:400;color:#9648d6;letter-spacing:0.004px;">Your plan includes up to 8 GB of RAM, 8 vCPU, and 100</span>
<span class="t" style="left:1791.60px;top:1506.31px;font-size:32px;font-weight:400;color:#9648d6;letter-spacing:-0.106px;">GB of Shared Disk.</span>
<span class="t" style="left:2070.90px;top:1506.31px;font-size:32px;font-weight:400;color:#9648d6;letter-spacing:0.239px;">Manage your Plan</span>
<span class="t" style="left:2333.50px;top:1506.31px;font-size:32px;font-weight:400;color:#9648d6;letter-spacing:0.000px;">.</span>
<span class="t" style="left:779.70px;top:1719.54px;font-size:45.2px;font-weight:700;color:#ffffff;letter-spacing:-0.548px;">Usage by Project</span>
<span class="t" style="left:815.80px;top:1896.59px;font-size:41px;font-weight:400;color:#ffffff;letter-spacing:0.666px;">thevalleyofcode.com</span>
<span class="t" style="left:814.47px;top:2018.36px;font-size:32.3px;font-weight:700;color:#ffffff;letter-spacing:0.347px;transform:scaleX(0.93);transform-origin:0 0;">CPU</span>
<span class="t" style="left:2464.70px;top:1874.68px;font-size:27.2px;font-weight:400;color:#a09eac;letter-spacing:0.613px;">Current Cost</span>
<span class="t" style="left:2530.20px;top:1916.89px;font-size:41.6px;font-weight:700;color:#ffffff;letter-spacing:0.178px;transform:scaleX(0.9);transform-origin:0 0;">$1.81</span>
</div>
</body></html>
